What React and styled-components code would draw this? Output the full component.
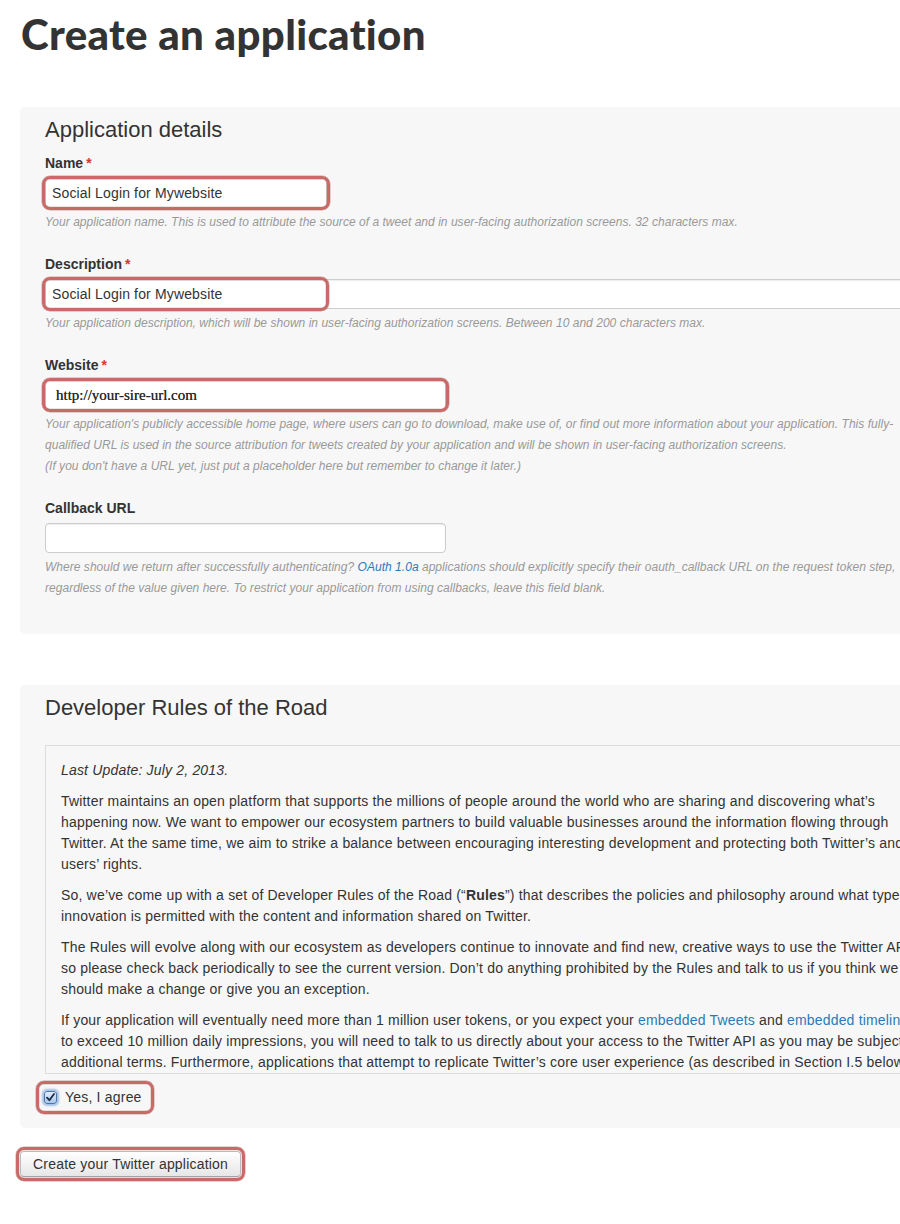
import React from 'react';
import styled, { createGlobalStyle } from 'styled-components';

const Global = createGlobalStyle`
  html, body { margin: 0; padding: 0; background: #fff; overflow: hidden; }
  body {
    font-family: "Liberation Sans", Arial, Helvetica, sans-serif;
    color: #333;
    font-size: 14px;
    line-height: 21px;
  }
`;

const Page = styled.div`
  width: 960px;
  padding: 0 0 40px 20px;
`;

const Title = styled.h1`
  font-family: Lato, "Open Sans", sans-serif;
  font-weight: 900;
  font-size: 42px;
  line-height: 50px;
  letter-spacing: 0.35px;
  font-variant-ligatures: none;
  font-feature-settings: "liga" 0;
  color: #333;
  margin: 9px 0 48px 1px;
`;

const Panel = styled.section`
  background: #f7f7f7;
  border-radius: 5px;
  padding: 8px 0 ${p => p.$bottom}px 25px;
  margin-bottom: ${p => p.$after}px;
`;

const SectionTitle = styled.h2`
  font-size: 22px;
  line-height: 30px;
  font-weight: normal;
  color: #333;
  margin: 0 0 ${p => p.$gap}px;
`;

const Group = styled.div`
  margin-bottom: 21px;
  &:last-child { margin-bottom: 0; }
`;

const Label = styled.label`
  display: block;
  font-weight: bold;
  font-size: 14px;
  line-height: 20px;
  margin-bottom: 5px;
`;

const Req = styled.span`
  color: #d9352c;
  font-weight: bold;
  margin-left: 3px;
`;

const InputWrap = styled.div`
  position: relative;
  display: ${p => (p.$block ? 'block' : 'inline-block')};
  vertical-align: top;
`;

const Input = styled.input`
  box-sizing: border-box;
  display: block;
  height: 30px;
  width: ${p => p.$w};
  border: 1px solid #ccc;
  border-radius: 4px;
  background: #fff;
  padding: ${p => (p.$serif ? '4px 10px' : '4px 6px')};
  font-family: ${p => (p.$serif ? '"Liberation Serif", "Times New Roman", serif' : '"Liberation Sans", Arial, sans-serif')};
  font-size: ${p => (p.$serif ? '15px' : '14px')};
  letter-spacing: ${p => (p.$serif ? '0' : '0.15px')};
  color: ${p => (p.$serif ? '#2a2a2a' : '#333')};
  text-shadow: ${p => (p.$serif ? '0 0 0.3px #333' : 'none')};
  box-shadow: inset 0 1px 1px rgba(0, 0, 0, 0.075);
  outline: none;
`;

const Callout = styled.span`
  position: absolute;
  pointer-events: none;
  top: ${p => p.$t}px;
  bottom: ${p => p.$b}px;
  left: ${p => p.$l}px;
  ${p => (p.$w ? `width: ${p.$w}px;` : `right: ${p.$r}px;`)}
  box-sizing: border-box;
  border: 3.5px solid #c86b68;
  border-radius: 8px;
  box-shadow: 0 0 0 0.5px rgba(150, 60, 60, 0.45), inset 0 0 0 0.5px rgba(150, 60, 60, 0.3);
`;

const Help = styled.p`
  margin: 4px 0 0;
  font-size: 12px;
  font-style: italic;
  color: #999;
  line-height: 21px;
  letter-spacing: 0.03px;
  white-space: nowrap;
`;

const Link = styled.a`
  color: #2a7ab8;
  text-decoration: none;
`;

const RulesBox = styled.div`
  box-sizing: border-box;
  height: 329px;
  overflow: hidden;
  border: 1px solid #ddd;
  border-right: none;
  background: #f7f7f7;
  padding: 14px 15px;
`;

const RuleP = styled.p`
  margin: 0 0 10px;
  line-height: 21px;
  letter-spacing: 0.18px;
  white-space: nowrap;
  font-style: ${p => (p.$italic ? 'italic' : 'normal')};
`;

const AgreeLabel = styled.label`
  position: relative;
  display: inline-flex;
  align-items: center;
  gap: 8px;
  height: 21px;
  margin: 13px 0 0 -1px;
  font-size: 14px;
  letter-spacing: 0.2px;
`;

const Check = styled.span`
  box-sizing: border-box;
  width: 13px;
  height: 13px;
  border: 1px solid #4f78aa;
  border-radius: 3px;
  background: linear-gradient(#e4eefb, #a8c5ea);
  box-shadow: 0 0 2px 2px rgba(95, 145, 215, 0.55);
  display: inline-flex;
  align-items: center;
  justify-content: center;
`;

const ButtonWrap = styled.div`
  position: relative;
  display: inline-block;
`;

const Button = styled.button`
  display: block;
  height: 26px;
  padding: 0 12px;
  border: 1px solid #bbb;
  border-bottom-color: #a2a2a2;
  border-radius: 4px;
  background: linear-gradient(#ffffff, #e6e6e6);
  font-family: "Liberation Sans", Arial, sans-serif;
  font-size: 14px;
  letter-spacing: 0.2px;
  color: #333;
  box-shadow: inset 0 1px 0 rgba(255, 255, 255, 0.2), 0 1px 2px rgba(0, 0, 0, 0.05);
`;

export default function App() {
  return (
    <Page>
      <Global />
      <Title>Create an application</Title>

      <Panel $bottom={35} $after={51}>
        <SectionTitle $gap={8}>Application details</SectionTitle>

        <Group>
          <Label>Name<Req>*</Req></Label>
          <InputWrap>
            <Input $w="282px" defaultValue="Social Login for Mywebsite" />
            <Callout $t={-2} $b={-2} $l={-3} $r={-3} />
          </InputWrap>
          <Help>Your application name. This is used to attribute the source of a tweet and in user-facing authorization screens. 32 characters max.</Help>
        </Group>

        <Group>
          <Label>Description<Req>*</Req></Label>
          <InputWrap $block>
            <Input $w="100%" defaultValue="Social Login for Mywebsite" />
            <Callout $t={-2} $b={-2} $l={-3} $w={287} />
          </InputWrap>
          <Help>Your application description, which will be shown in user-facing authorization screens. Between 10 and 200 characters max.</Help>
        </Group>

        <Group>
          <Label>Website<Req>*</Req></Label>
          <InputWrap>
            <Input $w="401px" $serif defaultValue="http://your-sire-url.com" />
            <Callout $t={-2} $b={-2} $l={-3} $r={-3} />
          </InputWrap>
          <Help>
            Your application's publicly accessible home page, where users can go to download, make use of, or find out more information about your application. This fully-
            <br />
            qualified URL is used in the source attribution for tweets created by your application and will be shown in user-facing authorization screens.
            <br />
            (If you don't have a URL yet, just put a placeholder here but remember to change it later.)
          </Help>
        </Group>

        <Group>
          <Label>Callback URL</Label>
          <InputWrap>
            <Input $w="401px" />
          </InputWrap>
          <Help>
            Where should we return after successfully authenticating? <Link href="#">OAuth 1.0a</Link> applications should explicitly specify their oauth_callback URL on the request token step,
            <br />
            regardless of the value given here. To restrict your application from using callbacks, leave this field blank.
          </Help>
        </Group>
      </Panel>

      <Panel $bottom={20} $after={23}>
        <SectionTitle $gap={22}>Developer Rules of the Road</SectionTitle>
        <RulesBox>
          <RuleP $italic>Last Update: July 2, 2013.</RuleP>
          <RuleP>
            Twitter maintains an open platform that supports the millions of people around the world who are sharing and discovering what’s
            <br />
            happening now. We want to empower our ecosystem partners to build valuable businesses around the information flowing through
            <br />
            Twitter. At the same time, we aim to strike a balance between encouraging interesting development and protecting both Twitter’s and
            <br />
            users’ rights.
          </RuleP>
          <RuleP>
            So, we’ve come up with a set of Developer Rules of the Road (“<b>Rules</b>”) that describes the policies and philosophy around what type of
            <br />
            innovation is permitted with the content and information shared on Twitter.
          </RuleP>
          <RuleP>
            The Rules will evolve along with our ecosystem as developers continue to innovate and find new, creative ways to use the Twitter API,
            <br />
            so please check back periodically to see the current version. Don’t do anything prohibited by the Rules and talk to us if you think we
            <br />
            should make a change or give you an exception.
          </RuleP>
          <RuleP>
            If your application will eventually need more than 1 million user tokens, or you expect your <Link href="#">embedded Tweets</Link> and <Link href="#">embedded timelines</Link>
            <br />
            to exceed 10 million daily impressions, you will need to talk to us directly about your access to the Twitter API as you may be subject to
            <br />
            additional terms. Furthermore, applications that attempt to replicate Twitter’s core user experience (as described in Section I.5 below)
          </RuleP>
        </RulesBox>
        <AgreeLabel>
          <Check>
            <svg width="9" height="9" viewBox="0 0 9 9">
              <path d="M1 4.6 L3.4 7.2 L8 1" fill="none" stroke="#1b2c44" strokeWidth="1.8" strokeLinecap="round" strokeLinejoin="round" />
            </svg>
          </Check>
          Yes, I agree
          <Callout $t={-6} $b={-6} $l={-8} $r={-12} />
        </AgreeLabel>
      </Panel>

      <ButtonWrap>
        <Button type="button">Create your Twitter application</Button>
        <Callout $t={-4} $b={-4} $l={-4} $r={-4} />
      </ButtonWrap>
    </Page>
  );
}
